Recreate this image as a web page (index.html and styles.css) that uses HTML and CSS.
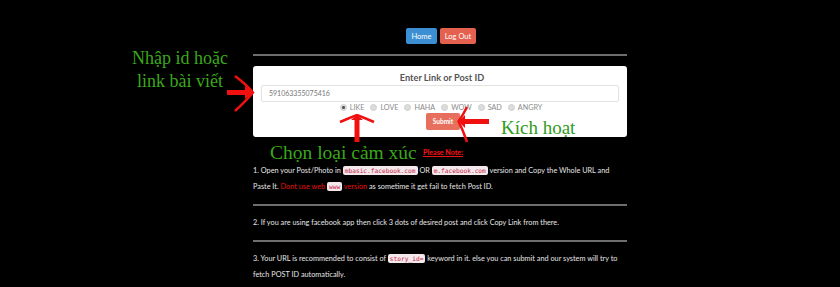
FILE: index.html
```html
<!DOCTYPE html>
<html>
<head>
<meta charset="utf-8">
<link rel="stylesheet" href="styles.css">
</head>
<body>
<div class="page">
  <div class="nav">
    <a class="btn btn-home">Home</a>
    <a class="btn btn-logout">Log Out</a>
  </div>
  <div class="rule"></div>
  <div class="panel">
    <div class="panel-title">Enter Link or Post ID</div>
    <div class="input">591063355075416</div>
    <div class="reacts">
      <span class="react"><span class="radio checked"></span>LIKE</span>
      <span class="react"><span class="radio"></span>LOVE</span>
      <span class="react"><span class="radio"></span>HAHA</span>
      <span class="react"><span class="radio"></span>WOW</span>
      <span class="react"><span class="radio"></span>SAD</span>
      <span class="react"><span class="radio"></span>ANGRY</span>
    </div>
    <div class="submit-row"><span class="submit">Submit</span></div>
  </div>
  <div class="note-head">Please Note:</div>
  <p class="note">1. Open your Post/Photo in <code>mbasic.facebook.com</code> OR <code>m.facebook.com</code> version and Copy the Whole URL and Paste It. <span class="red">Dont use web <code>www</code> version</span> as sometime it get fail to fetch Post ID.</p>
  <div class="rule rule-sep"></div>
  <p class="note">2. If you are using facebook app then click 3 dots of desired post and click Copy Link from there.</p>
  <div class="rule rule-sep"></div>
  <p class="note">3. Your URL is recommended to consist of <code>story_id=</code> keyword in it. else you can submit and our system will try to fetch POST ID automatically.</p>
</div>

<div class="anno anno-link">Nhập id hoặc<br>link bài viết</div>
<div class="anno anno-react">Chọn loại cảm xúc</div>
<div class="anno anno-submit">Kích hoạt</div>

<svg class="arrow arrow-right" width="30" height="40" viewBox="0 0 30 40">
  <rect x="0" y="15" width="24" height="5" fill="#f01010"/>
  <path d="M8 1 Q20 10 26 17.5 Q20 25 8 36" fill="none" stroke="#f01010" stroke-width="2.5"/>
  <path d="M18 11 L26.5 17.5 L18 24 Z" fill="#f01010"/>
</svg>
<svg class="arrow arrow-up" width="36" height="28" viewBox="0 0 36 28">
  <rect x="15.5" y="4" width="5" height="24" fill="#f01010"/>
  <path d="M1 8 Q10 4 18 1 Q26 4 35 8" fill="none" stroke="#f01010" stroke-width="2.5"/>
  <path d="M12 6 L18 1 L24 6 Z" fill="#f01010"/>
</svg>
<svg class="arrow arrow-left" width="32" height="40" viewBox="0 0 32 40">
  <rect x="4" y="13" width="28" height="5" fill="#f01010"/>
  <path d="M10 1 Q6 9 1.5 15.5 Q6 24 10 36" fill="none" stroke="#f01010" stroke-width="2.5"/>
  <path d="M8 9 L1.5 15.5 L8 22 Z" fill="#f01010"/>
</svg>
</body>
</html>
```

FILE: styles.css
```css
html, body {
  margin: 0;
  padding: 0;
  background: #000;
}
body {
  width: 840px;
  height: 287px;
  overflow: hidden;
  position: relative;
  font-family: Lato, "Open Sans", sans-serif;
}
.page {
  width: 374px;
  margin-left: 253px;
  padding-top: 28px;
}
.nav {
  display: flex;
  justify-content: center;
  gap: 3px;
  height: 17px;
  margin-left: 2px;
}
.btn {
  display: flex;
  align-items: center;
  justify-content: center;
  height: 16px;
  border-radius: 2px;
  color: #fff;
  font-size: 7.5px;
  box-sizing: border-box;
}
.btn-home {
  width: 31px;
  background: #3c8fd3;
}
.btn-logout {
  width: 36px;
  background: #e5614f;
}
.rule {
  height: 2px;
  background: #6e6e6e;
  margin-top: 9px;
}
.panel {
  margin-top: 10px;
  background: #fff;
  border-radius: 3px;
  padding: 6px 8px 8px;
  height: 71px;
  box-sizing: border-box;
}
.panel-title {
  text-align: center;
  font-size: 9.2px;
  font-weight: bold;
  color: #555;
  line-height: 12px;
  padding-left: 4px;
}
.input {
  margin-top: 1px;
  height: 17px;
  border: 1px solid #e2e2e2;
  border-radius: 2px;
  box-sizing: border-box;
  padding-left: 7px;
  font-size: 7px;
  line-height: 15px;
  color: #777;
}
.reacts {
  display: flex;
  justify-content: center;
  gap: 6px;
  height: 9px;
  margin-top: 1px;
  padding-left: 2px;
  font-size: 7.2px;
  color: #8a8a8a;
  line-height: 9px;
}
.react {
  display: flex;
  align-items: center;
  gap: 3px;
}
.radio {
  width: 5px;
  height: 5px;
  border-radius: 50%;
  background: #dcdcdc;
  border: 0.5px solid #cfcfcf;
}
.radio.checked {
  background: radial-gradient(circle, #555 0 1.3px, #dcdcdc 1.6px);
}
.submit-row {
  display: flex;
  justify-content: center;
  margin-top: 1px;
  padding-left: 6px;
}
.submit {
  display: flex;
  align-items: center;
  justify-content: center;
  width: 34px;
  height: 17px;
  background: #e66f5e;
  border-radius: 2px;
  color: #fff;
  font-size: 6.5px;
  font-weight: bold;
}
.note-head {
  margin-top: 10px;
  text-align: center;
  padding-left: 6px;
  font-size: 7.1px;
  font-weight: 900;
  color: #ee1111;
  text-decoration: underline;
  line-height: 12px;
}
.note {
  margin: 4px 0 0;
  font-size: 7.3px;
  line-height: 16px;
  color: #e6e6e6;
}
.note code {
  font-family: "DejaVu Sans Mono", "Liberation Mono", monospace;
  font-size: 6.2px;
  background: #f3e8ea;
  color: #c7254e;
  padding: 1px 2px;
  border-radius: 2px;
}
.red {
  color: #e51010;
}
.rule-sep {
  margin-top: 9px;
  margin-bottom: 9px;
}
.anno {
  position: absolute;
  font-family: "Liberation Serif", "DejaVu Serif", serif;
  color: #3aa81a;
  font-size: 18px;
  line-height: 23px;
  white-space: nowrap;
}
.anno-link {
  left: 132px;
  top: 47px;
  text-align: center;
}
.anno-react {
  left: 270px;
  top: 141px;
  font-size: 19.5px;
}
.anno-submit {
  left: 501px;
  top: 116px;
  font-size: 19px;
  color: #2f9a1c;
}
.arrow {
  position: absolute;
}
.arrow-right {
  left: 227px;
  top: 75px;
}
.arrow-up {
  left: 339px;
  top: 114px;
}
.arrow-left {
  left: 457px;
  top: 106px;
}
```
